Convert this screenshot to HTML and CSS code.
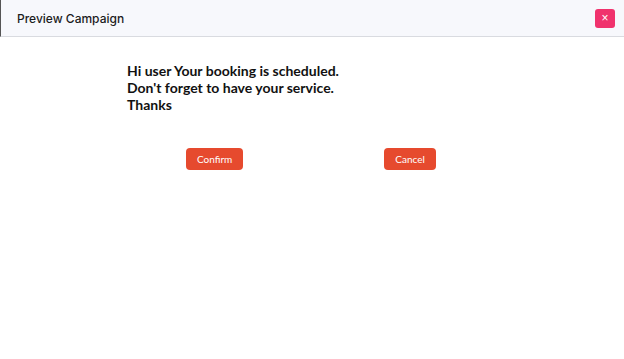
FILE: index.html
```html
<!DOCTYPE html>
<html lang="en">
<head>
    <meta charset="UTF-8">
    <title>Preview Campaign</title>
    <link rel="stylesheet" href="styles.css">
</head>
<body>
    <div class="modal">
        <div class="modal-header">
            <h2>Preview Campaign</h2>
            <button class="close-btn">&times;</button>
        </div>
        <div class="modal-body">
            <p class="message">Hi user Your booking is scheduled.<br>Don't forget to have your service.<br>Thanks</p>
            <div class="actions">
                <button class="action-btn">Confirm</button>
                <button class="action-btn">Cancel</button>
            </div>
        </div>
    </div>
</body>
</html>
```

FILE: styles.css
```css
body {
    margin: 0;
    padding: 0;
    background: #ffffff;
    font-family: 'Lato', sans-serif;
    color: #111;
}
.modal {
    width: 624px;
    height: 359px;
}
.modal-header {
    height: 36px;
    background: #f7f8fc;
    border-bottom: 1px solid #d9dbe0;
    border-left: 1px solid #555;
    display: flex;
    align-items: center;
    justify-content: space-between;
    padding: 0 9px 0 16px;
}
.modal-header h2 {
    margin: 0;
    font-family: 'Inter', sans-serif;
    font-size: 12px;
    font-weight: 500;
    color: #1c1c1c;
}
.close-btn {
    width: 20px;
    height: 19px;
    padding: 0;
    border: none;
    border-radius: 3px;
    background: #f0326d;
    color: #fff;
    font-size: 12px;
    line-height: 19px;
    cursor: pointer;
}
.modal-body {
    padding-top: 25px;
}
.message {
    margin: 0 0 0 127px;
    font-size: 14px;
    font-weight: 700;
    line-height: 17px;
    color: #111;
}
.actions {
    display: flex;
    gap: 141px;
    margin: 35px 0 0 186px;
}
.action-btn {
    height: 22px;
    padding: 0 11px;
    border: none;
    border-radius: 4px;
    background: #e64a2e;
    color: #fff;
    font-family: 'Lato', sans-serif;
    font-size: 10px;
    cursor: pointer;
}
```
